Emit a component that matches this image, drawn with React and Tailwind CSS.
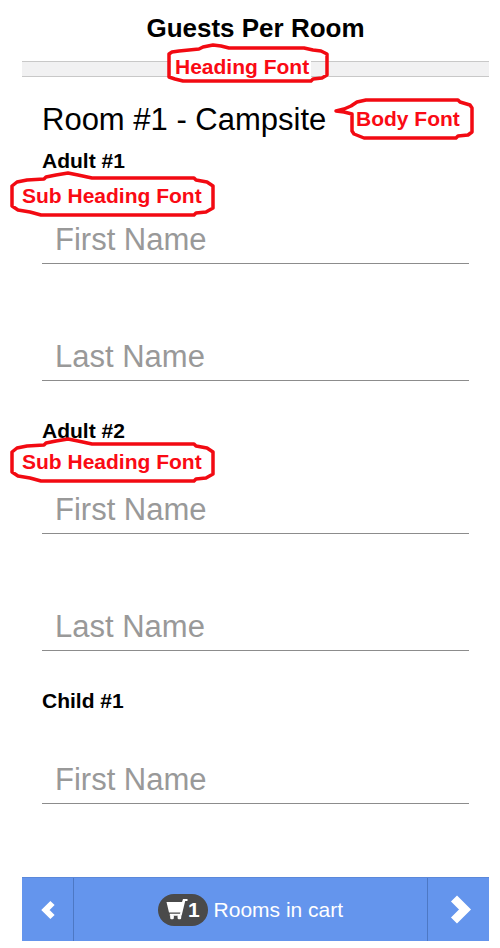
import React from "react";

const guests = [
  { name: "Adult #1", fields: ["First Name", "Last Name"], callout: "top-[22px]" },
  { name: "Adult #2", fields: ["First Name", "Last Name"], callout: "top-[18px]" },
  { name: "Child #1", fields: ["First Name"] },
];

// Red speech bubble laid over the form to annotate a font
const Callout = ({ label, d, width, height, className, textClass }) => (
  <div className={`absolute z-10 pointer-events-none ${className}`}>
    <span
      className={`absolute whitespace-nowrap text-[21px] leading-6 font-bold text-[#fa0a14] ${textClass}`}
    >
      {label}
    </span>
    <svg
      className="relative"
      width={width}
      height={height}
      viewBox={`0 0 ${width} ${height}`}
      fill="none"
      stroke="#f20a12"
      strokeWidth="3.5"
      strokeLinejoin="round"
      aria-hidden="true"
    >
      <path d={d} />
    </svg>
  </div>
);

const Field = ({ id, label }) => (
  <input
    id={id}
    type="text"
    aria-label={label}
    placeholder={label}
    className="block w-full h-12 px-[13px] border-b border-[#8c8c8c] bg-transparent text-[31px] text-black placeholder:text-[#999999] outline-none"
  />
);

const Guest = ({ guest, index }) => (
  <section className="relative">
    <h3 className="text-[21px] leading-6 font-bold">{guest.name}</h3>
    {guest.callout && (
      <Callout
        label="Sub Heading Font"
        width={206}
        height={46}
        className={`-left-8 ${guest.callout}`}
        textClass="left-3 top-[13px]"
        d="M2 15V35L8 39L20 41L31 44H184L186 42L196 41L203 37V15L197 11L186 9L184 7H82L68 4L58 2L46 4L36 6L34 8L17 9L7 11Z"
      />
    )}
    <div className="mt-[43px] flex flex-col gap-[69px]">
      {guest.fields.map((field) => (
        <Field key={field} id={`guest-${index}-${field}`} label={field} />
      ))}
    </div>
  </section>
);

const CartIcon = () => (
  <svg width="22" height="22" viewBox="0 0 22 22" fill="#fff" aria-hidden="true">
    <path d="M0.5 3H16L17 0H21.5V2H19.2L15.6 16.8H3.8V14.8H14L14.4 13.4H3Z" />
    <rect x="4.2" y="16" width="3.6" height="4.2" rx="1.2" />
    <rect x="11.6" y="16" width="3.6" height="4.2" rx="1.2" />
  </svg>
);

const CartBar = () => (
  <footer className="mt-[73px] flex h-16 border-t border-[#5b88da] bg-[#6495ed] text-white">
    <button
      type="button"
      aria-label="Previous"
      className="flex w-[52px] items-center justify-center border-r border-[#4d78c4]"
    >
      <svg width="14" height="20" viewBox="0 0 14 20" fill="none" stroke="#fff" strokeWidth="6">
        <path d="M11.5 3L4.5 10L11.5 17" />
      </svg>
    </button>
    <button type="button" className="flex flex-1 items-center justify-center gap-1.5 text-[21px]">
      <span className="flex h-8 items-center rounded-full bg-[#4a4a4a] px-2 font-bold">
        <CartIcon />
        <span>1</span>
      </span>
      Rooms in cart
    </button>
    <button
      type="button"
      aria-label="Next"
      className="flex w-[62px] items-center justify-center border-l border-[#4d78c4]"
    >
      <svg className="ml-1" width="22" height="30" viewBox="0 0 22 30" fill="none" stroke="#fff" strokeWidth="8.5">
        <path d="M4 3.5L15 14.5L4 25.5" />
      </svg>
    </button>
  </footer>
);

const App = () => {
  return (
    <main className="bg-white pt-3 pb-2 pl-[22px] pr-[11px] font-['Liberation_Sans',Arial,sans-serif] text-black">
      <header className="relative">
        <h1 className="text-center text-[26px] leading-8 font-bold">Guests Per Room</h1>
        <div className="mt-[17px] h-4 border-y border-[#c8c8c8] bg-[#f1f1f2]" />
        <Callout
          label="Heading Font"
          width={162}
          height={40}
          className="left-[145px] top-[31px]"
          textClass="left-1 top-3 bg-white pl-1 pr-0.5"
          d="M2 11V34L8 36L16 38H144L146 36L155 35L160 32V11L154 8L146 7L137 5H62L54 3L46 2L36 4L32 6L12 8L5 9Z"
        />
      </header>

      <form className="px-5 pt-[25px]" onSubmit={(e) => e.preventDefault()}>
        <div className="relative mb-[11px]">
          <h2 className="text-[31px] leading-9">Room #1 - Campsite</h2>
          <Callout
            label="Body Font"
            width={140}
            height={42}
            className="left-[292px] -top-1"
            textClass="left-[22px] top-[9px]"
            d="M2 13L10 11L17 8L23 4L32 2H124L126 4L136 7L138 10V34L134 37L124 38L122 40H30L20 36L18 33V16L10 14Z"
          />
        </div>
        <div className="flex flex-col gap-[38px]">
          {guests.map((guest, index) => (
            <Guest key={guest.name} guest={guest} index={index} />
          ))}
        </div>
      </form>

      <CartBar />
    </main>
  );
};

export default App;
